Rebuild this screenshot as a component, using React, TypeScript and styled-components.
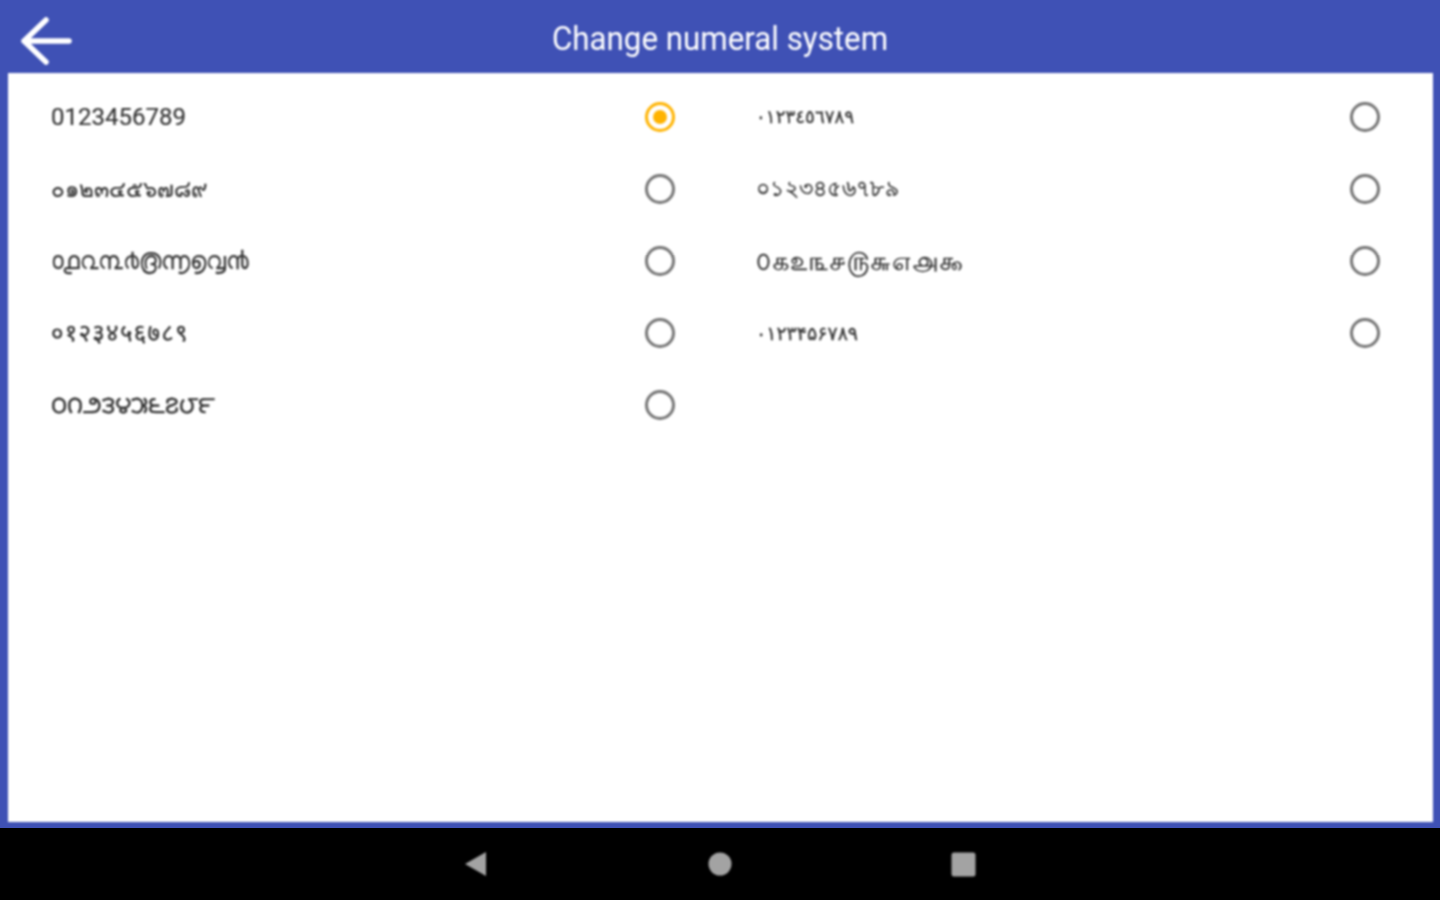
import React from "react";
import styled, { createGlobalStyle } from "styled-components";

const Global = createGlobalStyle`
  html, body { margin: 0; padding: 0; width: 1440px; height: 900px; overflow: hidden; background: #000; }
  #root { width: 1440px; height: 900px; }
`;
const Screen = styled.div`
  width: 1440px; height: 900px; display: flex; flex-direction: column;
  font-family: Roboto, "Noto Sans", "DejaVu Sans", sans-serif;
`;
const AppBar = styled.header`
  height: 73px; flex: none; background: #3f51b5; display: flex; align-items: center; position: relative; justify-content: center;
`;
const BackButton = styled.button`
  position: absolute; left: 19px; top: 15px; width: 54px; height: 52px; padding: 0; border: 0; background: none; color: #fff;
  filter: blur(0.8px);
`;
const Title = styled.h1`
  margin: 7px 0 0; color: #fff; font-size: 31.3px; font-weight: 400; line-height: 1; transform: scaleY(1.04);
  filter: blur(0.8px);
`;
const Frame = styled.main`
  flex: 1; background: #3f51b5; padding: 0 7px 6px 8px; display: flex; min-height: 0;
`;
const Panel = styled.section`
  flex: 1; background: #fff; padding-top: 8px; display: grid; grid-template-columns: 705px 705px; grid-auto-rows: 72px;
  filter: blur(0.8px);
`;
const Option = styled.label`
  display: flex; align-items: center; justify-content: space-between; padding: 0 38px 0 43px;
`;
const Digits = styled.span<{ $size: number; $spacing?: number; $stroke?: number }>`
  color: #333; font-size: ${(p) => p.$size}px; letter-spacing: ${(p) => p.$spacing ?? 0}px; line-height: 1; unicode-bidi: isolate;
  -webkit-text-stroke: ${(p) => p.$stroke ?? 0}px #333;
`;
const Radio = styled.span<{ $on?: boolean }>`
  width: 30px; height: 30px; box-sizing: border-box; border-radius: 50%; border: 3px solid ${(p) => (p.$on ? "#ffb300" : "#757575")};
  display: flex; align-items: center; justify-content: center;
  &::after { content: ""; width: 14px; height: 14px; border-radius: 50%; background: ${(p) => (p.$on ? "#ffb300" : "transparent")}; }
`;
const NavBar = styled.nav`
  height: 72px; flex: none; background: #000; display: flex; align-items: center; justify-content: center;
`;
const NavSlot = styled.span`
  width: 243px; display: flex; justify-content: center; color: #a3a3a3; filter: blur(0.8px);
`;

const options: { text: string; size: number; spacing?: number; stroke?: number; on?: boolean }[] = [
  { text: "0123456789", size: 24, stroke: 0.15, on: true },
  { text: "٠١٢٣٤٥٦٧٨٩", size: 18.3, stroke: 0.3 },
  { text: "๐๑๒๓๔๕๖๗๘๙", size: 22.5, stroke: 0.15 },
  { text: "০১২৩৪৫৬৭৮৯", size: 22, spacing: 0.3, stroke: 0.4 },
  { text: "൦൧൨൩൪൫൬൭൮൯", size: 24, stroke: 0.25 },
  { text: "௦௧௨௩௪௫௬௭௮௯", size: 26, spacing: 0.5, stroke: 0.3 },
  { text: "०१२३४५६७८९", size: 24, spacing: 1.3, stroke: 0.3 },
  { text: "۰۱۲۳۴۵۶۷۸۹", size: 19, stroke: 0.3 },
  { text: "౦౧౨౩౪౫౬౭౮౯", size: 24, stroke: 0.4 },
];

export default function App() {
  return (
    <>
      <Global />
      <Screen>
        <AppBar>
          <BackButton aria-label="Back">
            <svg width="54" height="52" viewBox="0 0 54 52" fill="none" stroke="currentColor" strokeWidth="5.5" strokeLinecap="round" strokeLinejoin="round">
              <path d="M50 26H5M27 5L5 26l22 21" />
            </svg>
          </BackButton>
          <Title>Change numeral system</Title>
        </AppBar>
        <Frame>
          <Panel>
            {options.map((o) => (
              <Option key={o.text}>
                <Digits $size={o.size} $spacing={o.spacing} $stroke={o.stroke}>{o.text}</Digits>
                <Radio $on={o.on} />
              </Option>
            ))}
          </Panel>
        </Frame>
        <NavBar>
          <NavSlot><svg width="24" height="26" viewBox="0 0 24 26"><path d="M21 1v24L0 13z" fill="currentColor" /></svg></NavSlot>
          <NavSlot><svg width="24" height="24" viewBox="0 0 24 24"><circle cx="12" cy="12" r="11.5" fill="currentColor" /></svg></NavSlot>
          <NavSlot><svg width="25" height="25" viewBox="0 0 25 25"><rect x="0.5" y="0.5" width="24" height="24" rx="2.5" fill="currentColor" /></svg></NavSlot>
        </NavBar>
      </Screen>
    </>
  );
}
